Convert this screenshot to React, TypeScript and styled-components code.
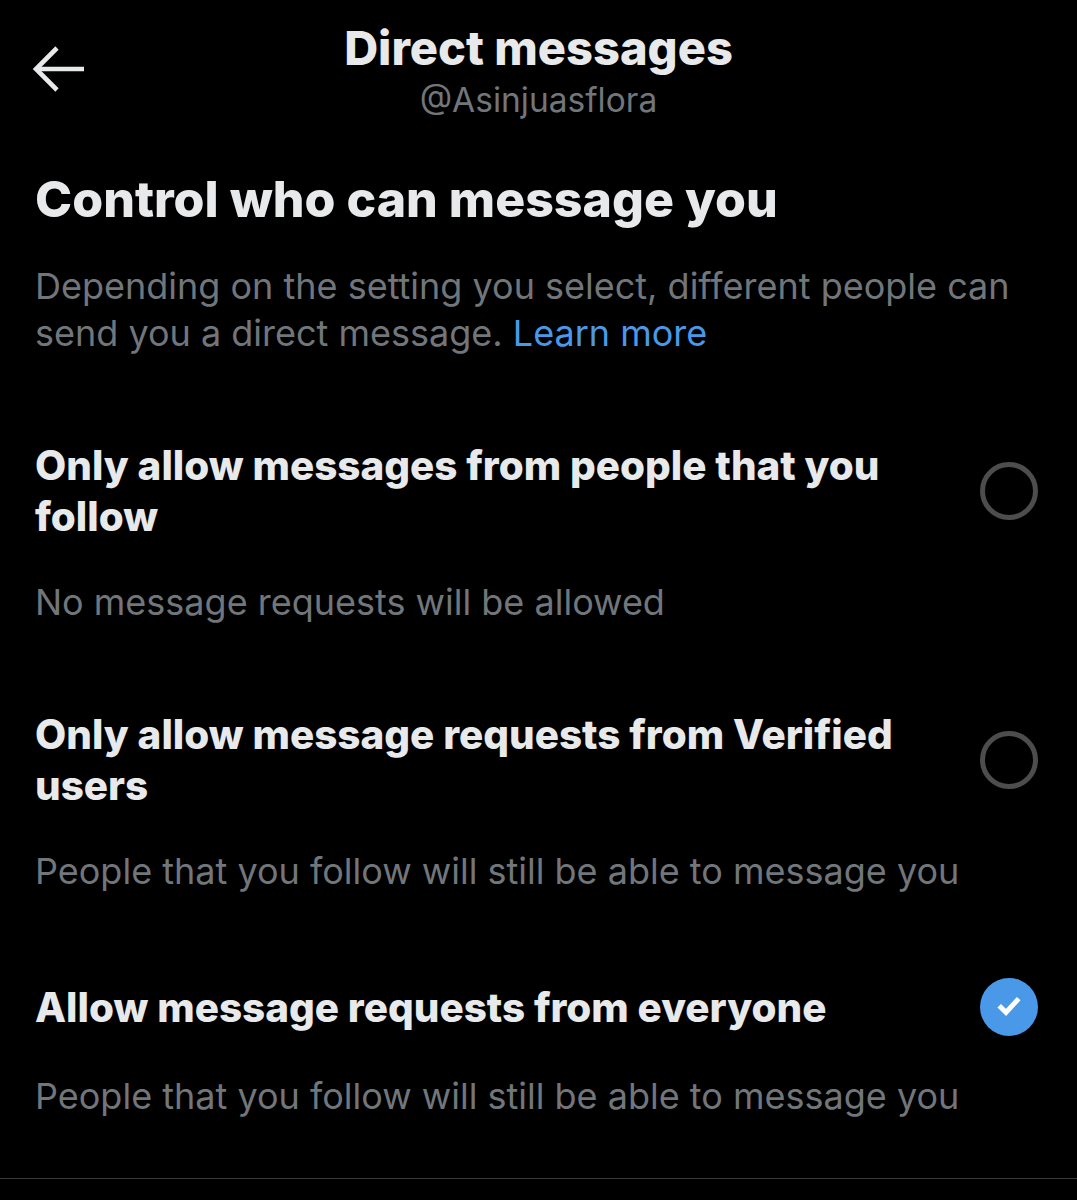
import React from "react";
import styled, { createGlobalStyle } from "styled-components";

const Global = createGlobalStyle`
  html, body { margin: 0; padding: 0; background: #000; }
  body { font-family: Inter, "Noto Sans", sans-serif; color: #e7e9ea; }
`;

const Page = styled.div`
  width: 1077px;
  min-height: 1200px;
  background: #000;
  display: flex;
  flex-direction: column;
`;

const Header = styled.header`
  position: relative;
  display: flex;
  flex-direction: column;
  align-items: center;
  padding-top: 22px;
  height: 108px;
`;

const BackButton = styled.button`
  position: absolute;
  left: 32px;
  top: 46px;
  width: 54px;
  height: 46px;
  padding: 0;
  border: 0;
  background: transparent;
  color: #e7e9ea;
  display: flex;
  align-items: center;
  justify-content: flex-start;
`;

const Title = styled.h1`
  margin: 0;
  font-size: 47px;
  line-height: 52px;
  font-weight: 800;
`;

const Handle = styled.div`
  font-size: 33.5px;
  line-height: 52px;
  color: #71767b;
`;

const Body = styled.main`
  padding: 41px 39px 0 35px;
  display: flex;
  flex-direction: column;
`;

const Heading = styled.h2`
  margin: 0;
  font-size: 50px;
  line-height: 56px;
  font-weight: 800;
`;

const Description = styled.p`
  margin: 36px 0 0;
  font-size: 36px;
  line-height: 47px;
  color: #71767b;
`;

const Link = styled.a`
  color: #4a99e9;
  text-decoration: none;
`;

const OptionList = styled.div`
  display: flex;
  flex-direction: column;
  gap: 83px;
  margin-top: 83px;
`;

const Option = styled.div`
  display: flex;
  flex-direction: column;
  gap: 37px;
`;

const OptionRow = styled.div`
  display: flex;
  align-items: center;
  gap: 36px;
`;

const OptionTitle = styled.div`
  flex: 1;
  font-size: 40.4px;
  line-height: 51px;
  font-weight: 800;
`;

const OptionHint = styled.div`
  font-size: 36px;
  line-height: 47px;
  color: #71767b;
`;

const Radio = styled.div<{ $checked?: boolean }>`
  flex: none;
  width: 58px;
  height: 58px;
  box-sizing: border-box;
  border-radius: 50%;
  border: ${(p) => (p.$checked ? "0" : "5px solid #4d4d4f")};
  background: ${(p) => (p.$checked ? "#4a99e9" : "transparent")};
  display: flex;
  align-items: center;
  justify-content: center;
`;

const Divider = styled.hr`
  margin: 58px 0 0;
  border: 0;
  height: 1px;
  background: #3a3a3c;
`;

const options = [
  { title: "Only allow messages from people that you follow", hint: "No message requests will be allowed", checked: false },
  { title: "Only allow message requests from Verified users", hint: "People that you follow will still be able to message you", checked: false },
  { title: "Allow message requests from everyone", hint: "People that you follow will still be able to message you", checked: true },
];

export default function App() {
  return (
    <Page>
      <Global />
      <Header>
        <BackButton aria-label="Back">
          <svg width="54" height="46" viewBox="0 0 54 46" fill="none" stroke="currentColor" strokeWidth="4.6" strokeLinecap="butt" strokeLinejoin="miter">
            <path d="M52 23H5" />
            <path d="M25 2L4 23l21 21" />
          </svg>
        </BackButton>
        <Title>Direct messages</Title>
        <Handle>@Asinjuasflora</Handle>
      </Header>
      <Body>
        <Heading>Control who can message you</Heading>
        <Description>
          Depending on the setting you select, different people can send you a direct message. <Link href="#">Learn more</Link>
        </Description>
        <OptionList>
          {options.map((o) => (
            <Option key={o.title}>
              <OptionRow>
                <OptionTitle>{o.title}</OptionTitle>
                <Radio $checked={o.checked}>
                  {o.checked && (
                    <svg width="30" height="30" viewBox="0 0 30 30" fill="none" stroke="#fff" strokeWidth="5" strokeLinecap="square">
                      <path d="M7 15.5l5 5L23 8.5" />
                    </svg>
                  )}
                </Radio>
              </OptionRow>
              <OptionHint>{o.hint}</OptionHint>
            </Option>
          ))}
        </OptionList>
      </Body>
      <Divider />
    </Page>
  );
}
